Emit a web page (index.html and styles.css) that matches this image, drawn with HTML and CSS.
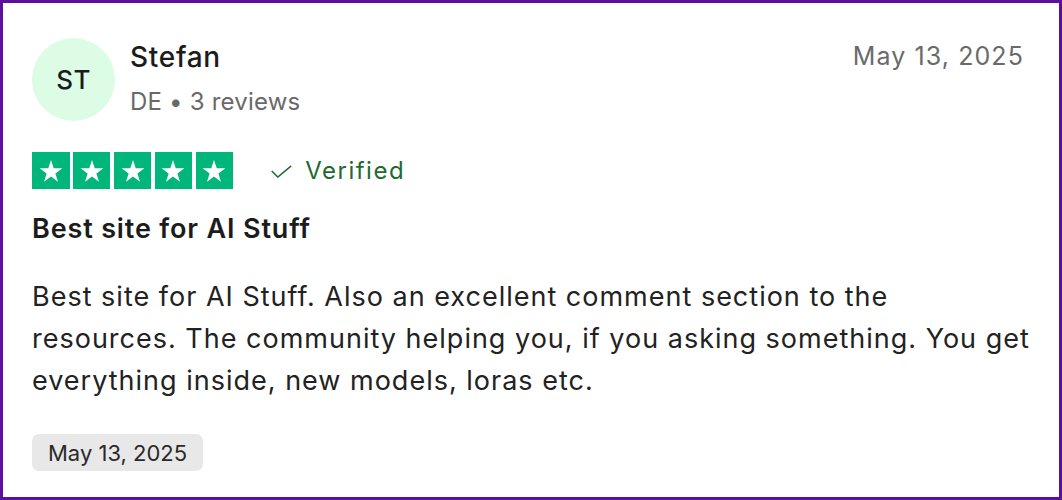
FILE: index.html
```html
<!DOCTYPE html>
<html lang="en">
<head>
<meta charset="utf-8">
<link rel="stylesheet" href="styles.css">
</head>
<body>
<article class="review">
  <header class="head">
    <div class="avatar">ST</div>
    <div class="who">
      <div class="name">Stefan</div>
      <div class="meta">DE • 3 reviews</div>
    </div>
    <div class="date">May 13, 2025</div>
  </header>
  <div class="rating">
    <div class="stars">
      <span class="star"><svg viewBox="0 0 24 24"><path d="M12 3.2l2.2 6.6h6.9l-5.6 4.1 2.1 6.6L12 16.4l-5.6 4.1 2.1-6.6-5.6-4.1h6.9z"/></svg></span>
      <span class="star"><svg viewBox="0 0 24 24"><path d="M12 3.2l2.2 6.6h6.9l-5.6 4.1 2.1 6.6L12 16.4l-5.6 4.1 2.1-6.6-5.6-4.1h6.9z"/></svg></span>
      <span class="star"><svg viewBox="0 0 24 24"><path d="M12 3.2l2.2 6.6h6.9l-5.6 4.1 2.1 6.6L12 16.4l-5.6 4.1 2.1-6.6-5.6-4.1h6.9z"/></svg></span>
      <span class="star"><svg viewBox="0 0 24 24"><path d="M12 3.2l2.2 6.6h6.9l-5.6 4.1 2.1 6.6L12 16.4l-5.6 4.1 2.1-6.6-5.6-4.1h6.9z"/></svg></span>
      <span class="star"><svg viewBox="0 0 24 24"><path d="M12 3.2l2.2 6.6h6.9l-5.6 4.1 2.1 6.6L12 16.4l-5.6 4.1 2.1-6.6-5.6-4.1h6.9z"/></svg></span>
    </div>
    <div class="verified">
      <svg class="check" viewBox="0 0 24 14"><path d="M1.5 6.5l6.5 6.5L22.5 1"/></svg>
      <span>Verified</span>
    </div>
  </div>
  <h2 class="title">Best site for AI Stuff</h2>
  <p class="body">Best site for AI Stuff. Also an excellent comment section to the resources. The community helping you, if you asking something. You get everything inside, new models, loras etc.</p>
  <div class="chip">May 13, 2025</div>
</article>
</body>
</html>
```
FILE: styles.css
```css
* { box-sizing: border-box; }
html, body { margin: 0; padding: 0; }
body {
  width: 1062px;
  height: 500px;
  background: #fff;
  font-family: Inter, "Noto Sans", sans-serif;
  color: #1c1c1c;
}
.review {
  width: 1062px;
  height: 500px;
  border: 3px solid #5c0f9e;
  padding: 35px 35px 0 29px;
  display: flex;
  flex-direction: column;
  align-items: flex-start;
}
.head {
  display: flex;
  align-items: flex-start;
  width: 100%;
}
.avatar {
  width: 83px;
  height: 83px;
  border-radius: 50%;
  background: #dcfce6;
  display: flex;
  align-items: center;
  justify-content: center;
  font-size: 26px;
  font-weight: 500;
  letter-spacing: 0.3px;
  color: #1c1c1c;
  flex-shrink: 0;
}
.who {
  margin-left: 15px;
  display: flex;
  flex-direction: column;
  gap: 13px;
  padding-top: 1.5px;
}
.name {
  font-size: 28px;
  font-weight: 500;
  line-height: 34px;
  letter-spacing: 0.7px;
}
.meta {
  font-size: 24px;
  line-height: 30px;
  letter-spacing: 0.2px;
  color: #696969;
}
.date {
  margin-left: auto;
  font-size: 25px;
  line-height: 34px;
  letter-spacing: 1.1px;
  color: #6a6a6a;
  padding-top: 1px;
}
.rating {
  margin-top: 30.7px;
  display: flex;
  align-items: center;
  gap: 37px;
}
.stars {
  display: flex;
  gap: 3.3px;
}
.star {
  width: 37.6px;
  height: 37.6px;
  background: #00b67a;
  display: flex;
  align-items: center;
  justify-content: center;
}
.star svg { width: 30px; height: 30px; fill: #fff; margin-top: 2px; }
.verified {
  display: flex;
  align-items: center;
  gap: 12px;
  color: #1f6a30;
  font-size: 24px;
  letter-spacing: 1.5px;
}
.check {
  width: 23px;
  height: 13px;
  fill: none;
  stroke: #1f6a30;
  stroke-width: 1.6;
  margin-top: 3px;
}
.title {
  margin: 23px 0 0;
  font-size: 27px;
  font-weight: 600;
  line-height: 34px;
  letter-spacing: 0.85px;
}
.body {
  margin: 30px 0 0;
  font-size: 27px;
  line-height: 42px;
  letter-spacing: 1px;
  width: 1000px;
  color: #222;
}
.chip {
  margin-top: 32px;
  background: #e8e8e8;
  border-radius: 7px;
  padding: 0 16px;
  height: 37px;
  display: flex;
  align-items: center;
  font-size: 22px;
  color: #2a2a2a;
}
```
